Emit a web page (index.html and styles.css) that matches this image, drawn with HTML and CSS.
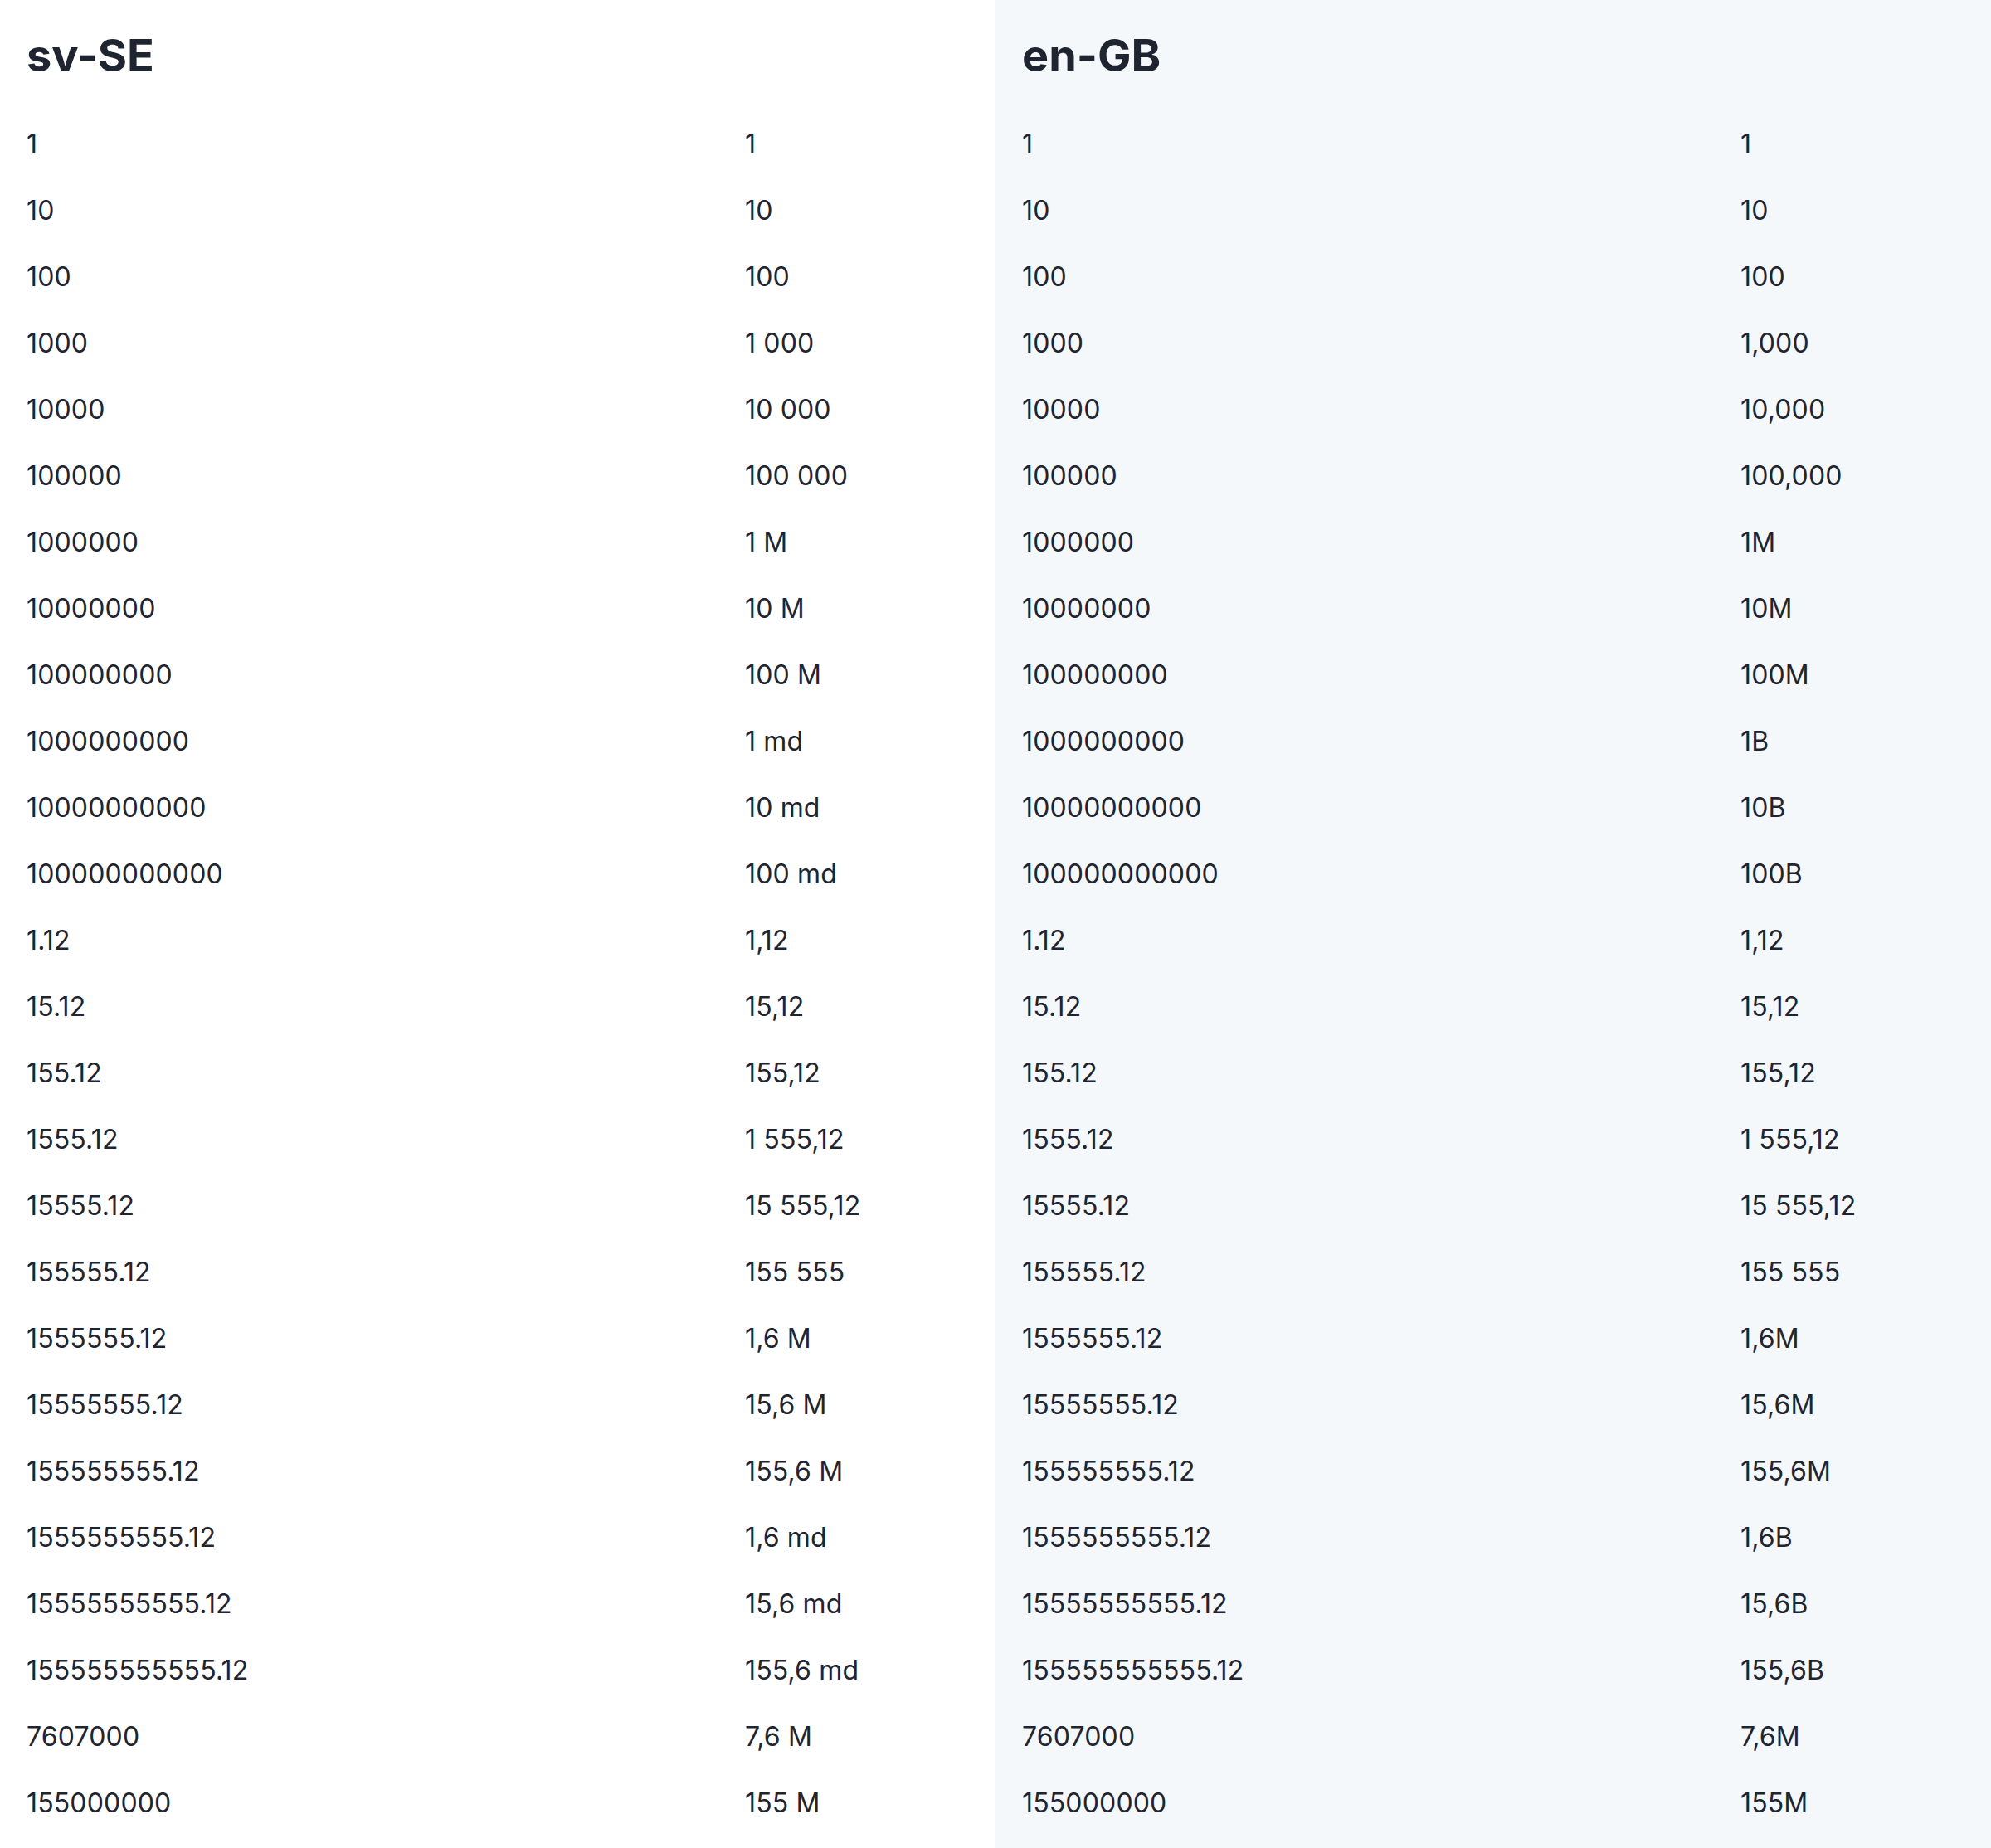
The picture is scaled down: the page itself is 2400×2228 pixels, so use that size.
FILE: index.html
```html
<!DOCTYPE html>
<html lang="en">
<head>
<meta charset="utf-8">
<title>Number formatting</title>
<link rel="stylesheet" href="styles.css">
</head>
<body>
<div class="page">
  <section class="panel">
    <h2 class="title">sv-SE</h2>
    <div class="rows">
      <div class="cell">1</div><div class="cell">1</div>
      <div class="cell">10</div><div class="cell">10</div>
      <div class="cell">100</div><div class="cell">100</div>
      <div class="cell">1000</div><div class="cell">1 000</div>
      <div class="cell">10000</div><div class="cell">10 000</div>
      <div class="cell">100000</div><div class="cell">100 000</div>
      <div class="cell">1000000</div><div class="cell">1 M</div>
      <div class="cell">10000000</div><div class="cell">10 M</div>
      <div class="cell">100000000</div><div class="cell">100 M</div>
      <div class="cell">1000000000</div><div class="cell">1 md</div>
      <div class="cell">10000000000</div><div class="cell">10 md</div>
      <div class="cell">100000000000</div><div class="cell">100 md</div>
      <div class="cell">1.12</div><div class="cell">1,12</div>
      <div class="cell">15.12</div><div class="cell">15,12</div>
      <div class="cell">155.12</div><div class="cell">155,12</div>
      <div class="cell">1555.12</div><div class="cell">1 555,12</div>
      <div class="cell">15555.12</div><div class="cell">15 555,12</div>
      <div class="cell">155555.12</div><div class="cell">155 555</div>
      <div class="cell">1555555.12</div><div class="cell">1,6 M</div>
      <div class="cell">15555555.12</div><div class="cell">15,6 M</div>
      <div class="cell">155555555.12</div><div class="cell">155,6 M</div>
      <div class="cell">1555555555.12</div><div class="cell">1,6 md</div>
      <div class="cell">15555555555.12</div><div class="cell">15,6 md</div>
      <div class="cell">155555555555.12</div><div class="cell">155,6 md</div>
      <div class="cell">7607000</div><div class="cell">7,6 M</div>
      <div class="cell">155000000</div><div class="cell">155 M</div>
    </div>
  </section>
  <section class="panel panel-alt">
    <h2 class="title">en-GB</h2>
    <div class="rows">
      <div class="cell">1</div><div class="cell">1</div>
      <div class="cell">10</div><div class="cell">10</div>
      <div class="cell">100</div><div class="cell">100</div>
      <div class="cell">1000</div><div class="cell">1,000</div>
      <div class="cell">10000</div><div class="cell">10,000</div>
      <div class="cell">100000</div><div class="cell">100,000</div>
      <div class="cell">1000000</div><div class="cell">1M</div>
      <div class="cell">10000000</div><div class="cell">10M</div>
      <div class="cell">100000000</div><div class="cell">100M</div>
      <div class="cell">1000000000</div><div class="cell">1B</div>
      <div class="cell">10000000000</div><div class="cell">10B</div>
      <div class="cell">100000000000</div><div class="cell">100B</div>
      <div class="cell">1.12</div><div class="cell">1,12</div>
      <div class="cell">15.12</div><div class="cell">15,12</div>
      <div class="cell">155.12</div><div class="cell">155,12</div>
      <div class="cell">1555.12</div><div class="cell">1 555,12</div>
      <div class="cell">15555.12</div><div class="cell">15 555,12</div>
      <div class="cell">155555.12</div><div class="cell">155 555</div>
      <div class="cell">1555555.12</div><div class="cell">1,6M</div>
      <div class="cell">15555555.12</div><div class="cell">15,6M</div>
      <div class="cell">155555555.12</div><div class="cell">155,6M</div>
      <div class="cell">1555555555.12</div><div class="cell">1,6B</div>
      <div class="cell">15555555555.12</div><div class="cell">15,6B</div>
      <div class="cell">155555555555.12</div><div class="cell">155,6B</div>
      <div class="cell">7607000</div><div class="cell">7,6M</div>
      <div class="cell">155000000</div><div class="cell">155M</div>
    </div>
  </section>
</div>
</body>
</html>
```
FILE: styles.css
```css
html, body {
  margin: 0;
  padding: 0;
  background: #ffffff;
}
body {
  font-family: Inter, "Noto Sans", sans-serif;
  color: #1f2530;
}
.page {
  display: grid;
  grid-template-columns: 1200px 1200px;
  min-height: 2228px;
}
.panel {
  padding: 33px 32px 32px 32px;
  background: #ffffff;
}
.panel-alt {
  background: #f4f8fb;
}
.title {
  margin: 0 0 34px 0;
  font-size: 54px;
  line-height: 67px;
  font-weight: 700;
  color: #1f2530;
}
.rows {
  display: grid;
  grid-template-columns: 866px 1fr;
}
.cell {
  font-size: 32px;
  line-height: 48px;
  padding: 16px 0;
  letter-spacing: 0.15px;
  white-space: nowrap;
}
```
